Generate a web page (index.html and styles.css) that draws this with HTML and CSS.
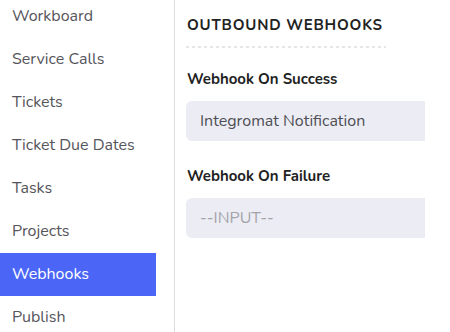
FILE: index.html
```html
<!DOCTYPE html>
<html lang="en">
<head>
  <meta charset="UTF-8">
  <title>Webhooks</title>
  <link rel="stylesheet" href="styles.css">
</head>
<body>

<div class="page">
  <nav class="sidebar">
    <a class="nav-item" href="#">Workboard</a>
    <a class="nav-item" href="#">Service Calls</a>
    <a class="nav-item" href="#">Tickets</a>
    <a class="nav-item" href="#">Ticket Due Dates</a>
    <a class="nav-item" href="#">Tasks</a>
    <a class="nav-item" href="#">Projects</a>
    <a class="nav-item active" href="#">Webhooks</a>
    <a class="nav-item" href="#">Publish</a>
  </nav>

  <main class="content">
    <h2 class="section-title">OUTBOUND WEBHOOKS</h2>

    <label class="field-label" for="onSuccess">Webhook On Success</label>
    <input class="field" type="text" id="onSuccess" value="Integromat Notification">

    <label class="field-label" for="onFailure">Webhook On Failure</label>
    <input class="field" type="text" id="onFailure" placeholder="--INPUT--">
  </main>
</div>

</body>
</html>
```

FILE: styles.css
```css
body { margin: 0; padding: 0; background: #fff; font-family: "Nunito", Lato, "Noto Sans", sans-serif; }
.page { display: flex; height: 332px; overflow: hidden; }
.sidebar { width: 174px; flex-shrink: 0; border-right: 1px solid #dcdcdc; display: flex; flex-direction: column; margin-top: -5px; }
.nav-item { display: block; flex-shrink: 0; width: 156px; box-sizing: border-box; height: 43px; line-height: 43px; padding-left: 12px; font-size: 16px; color: #55555b; text-decoration: none; }
.nav-item.active { background: #4b66f6; color: #fff; }
.content { width: 239px; padding: 14px 0 0 11px; overflow: hidden; }
.section-title { margin: 0; width: 199px; padding-bottom: 12px; padding-left: 1px; font-size: 15px; font-weight: bold; color: #222; letter-spacing: 0.8px; line-height: 22px; white-space: nowrap; background-image: linear-gradient(to right, #e6e6e6 50%, transparent 50%); background-size: 6px 2px; background-repeat: repeat-x; background-position: left bottom; }
.field-label { display: block; margin-top: 20px; padding-left: 1px; font-size: 15px; font-weight: bold; color: #222; line-height: 22px; }
.field { display: block; width: 260px; box-sizing: border-box; height: 40px; margin-top: 11px; padding: 0 14px; font-family: inherit; font-size: 16px; color: #4f4f55; background: #ecedf4; border: none; border-radius: 6px; outline: none; }
.field::placeholder { color: #a3a3a8; }
.field + .field-label { margin-top: 24px; }
```
